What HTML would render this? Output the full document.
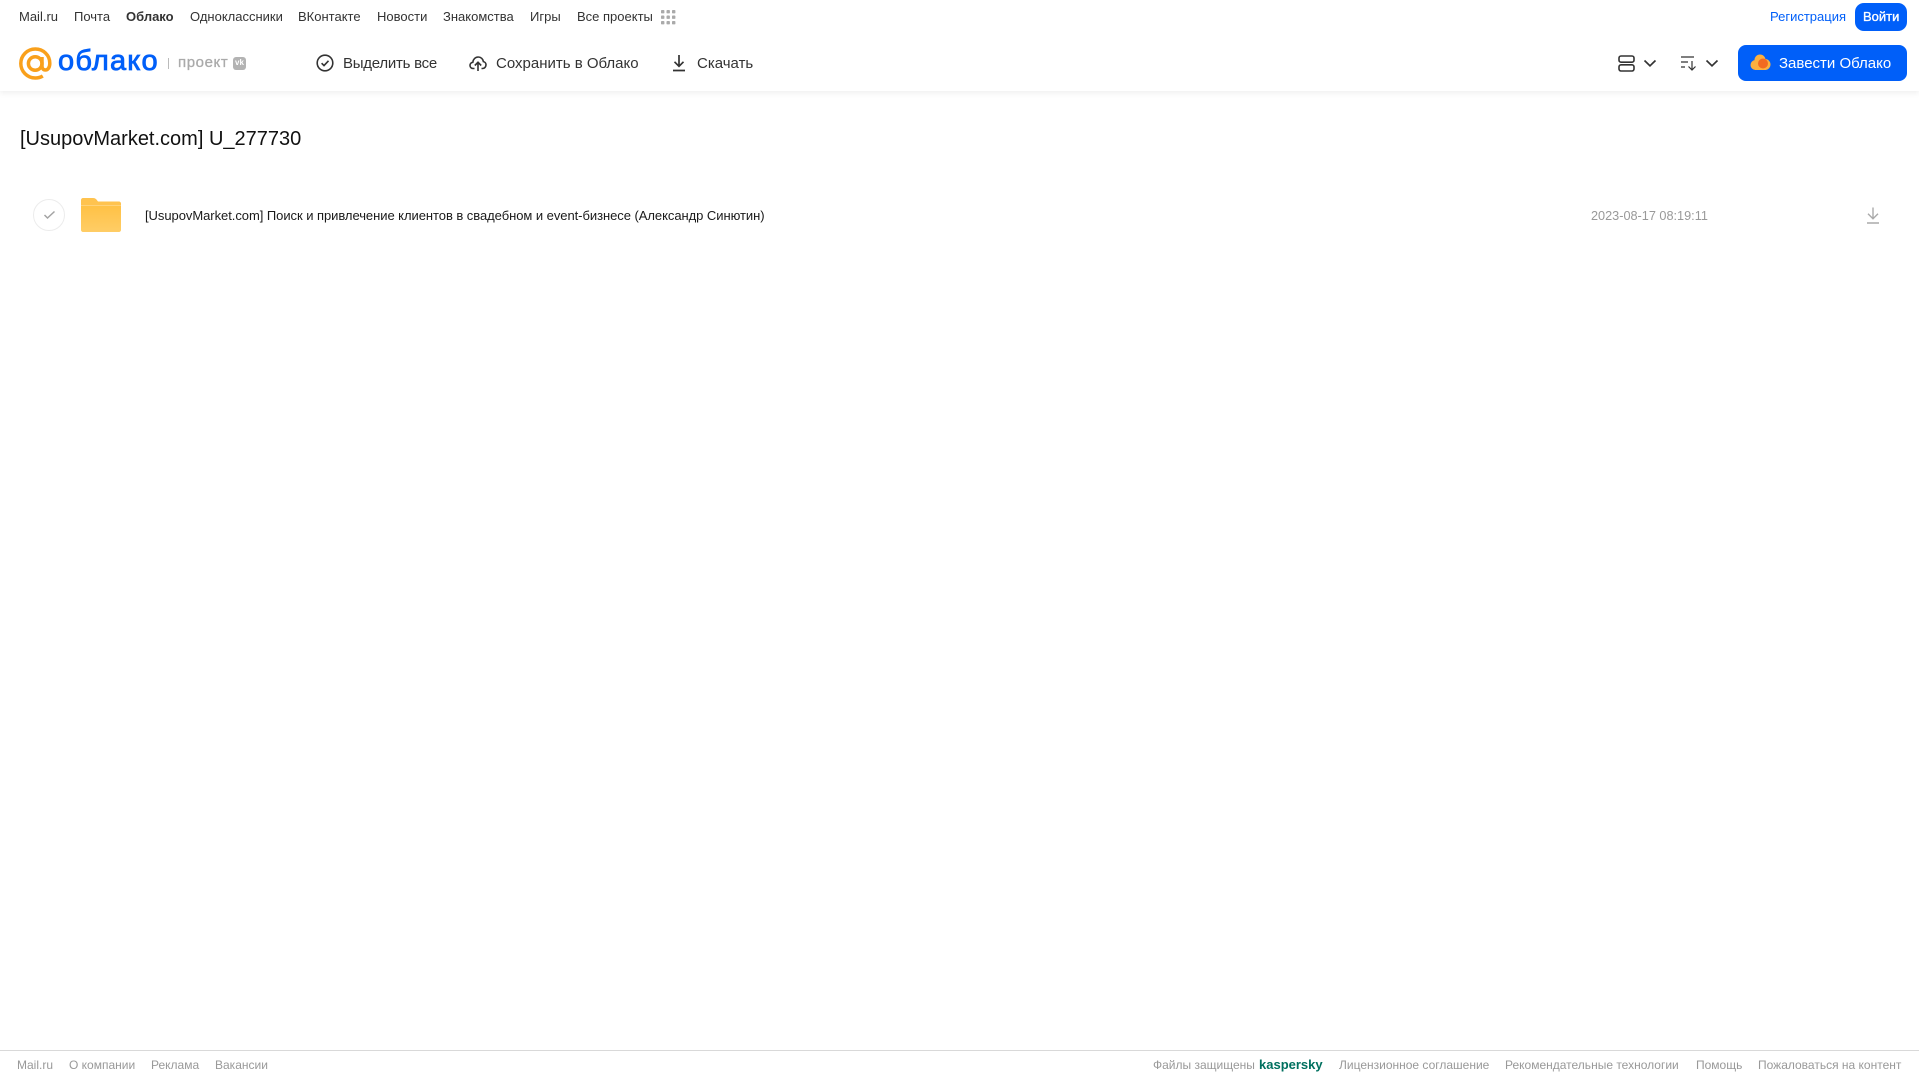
<!DOCTYPE html>
<html lang="ru"><head><meta charset="utf-8"><title>Облако</title>
<style>
html,body{margin:0;padding:0;background:#fff}
body{width:1919px;height:1079px;position:relative;overflow:hidden;font-family:"Liberation Sans",Arial,sans-serif}
.t{position:absolute;white-space:nowrap;line-height:20px;height:20px}
.n{top:7px;font-size:13px;color:#333}
.b{top:53px;font-size:15px;color:#333;padding-top:1px}
.f{top:1055px;font-size:12px;color:#999}
svg{position:absolute;display:block}
</style></head><body>
<div style="position:absolute;left:0;top:0;width:1919px;height:91px;background:#fff;box-shadow:0 2px 6px rgba(0,0,0,.07)"></div>

<span class="t n" style="left:19px">Mail.ru</span>
<span class="t n" style="left:74px">Почта</span>
<span class="t n" style="left:126px;font-weight:bold">Облако</span>
<span class="t n" style="left:190px">Одноклассники</span>
<span class="t n" style="left:298px">ВКонтакте</span>
<span class="t n" style="left:377px">Новости</span>
<span class="t n" style="left:443px">Знакомства</span>
<span class="t n" style="left:530px">Игры</span>
<span class="t n" style="left:577px">Все проекты</span>
<svg style="left:661px;top:10px" width="15" height="15" fill="#aaa"><rect x="0" y="0" width="3.4" height="3.4" rx=".8"/><rect x="5.5" y="0" width="3.4" height="3.4" rx=".8"/><rect x="11" y="0" width="3.4" height="3.4" rx=".8"/><rect x="0" y="5.5" width="3.4" height="3.4" rx=".8"/><rect x="5.5" y="5.5" width="3.4" height="3.4" rx=".8"/><rect x="11" y="5.5" width="3.4" height="3.4" rx=".8"/><rect x="0" y="11" width="3.4" height="3.4" rx=".8"/><rect x="5.5" y="11" width="3.4" height="3.4" rx=".8"/><rect x="11" y="11" width="3.4" height="3.4" rx=".8"/></svg>

<span class="t n" style="left:1770px;color:#005ff9">Регистрация</span>
<div style="position:absolute;left:1855px;top:3px;width:52px;height:28px;border-radius:9px;background:#005ff9"></div>
<span class="t n" style="left:1863px;color:#fff;font-size:13px;-webkit-text-stroke:.35px #fff">Войти</span>

<svg style="left:19px;top:47px" width="33" height="33" viewBox="0 0 33 33" fill="none" stroke="#f9a01b" stroke-width="3.5"><circle cx="16.2" cy="16.5" r="6.8"/><path d="M23 10v8.800c0 2.800 1.500 4.200 3.300 4.200 2.400 0 4.500-2.300 4.500-6.800C30.800 8.200 24.400 2 16.300 2 8.300 2 1.800 8.500 1.800 16.500S8.300 31 16.300 31c3 0 5.400-.7 7.500-2"/></svg>
<span class="t" style="left:58px;top:45px;height:32px;line-height:32px;font-size:29px;color:#005ff9;letter-spacing:1.200px;-webkit-text-stroke:.8px #005ff9">облако</span>
<div style="position:absolute;left:168px;top:58px;width:1px;height:11px;background:#bbb"></div>
<span class="t" style="left:178px;top:53px;font-size:15px;color:#aaa;letter-spacing:.6px;-webkit-text-stroke:.3px #aaa">проект</span>
<div style="position:absolute;left:233px;top:57px;width:13px;height:13px;border-radius:3px;background:#b3b3b3"></div>
<span class="t" style="left:235px;top:53px;font-size:8px;font-weight:bold;color:#fff;line-height:20px">vk</span>

<svg style="left:316px;top:54px" width="18" height="18" viewBox="0 0 18 18" fill="none" stroke="#333" stroke-width="1.6"><circle cx="9" cy="9" r="7.800"/><path d="M5.600 9.200l2.400 2.400 4.500-4.800"/></svg>
<span class="t b" style="left:343px;letter-spacing:-.25px">Выделить все</span>
<svg style="left:469px;top:54px" width="18" height="18" viewBox="0 0 18 18" fill="none" stroke="#333" stroke-width="1.6"><path d="M5.500 14.500H4.200C2.400 14.500 1 13.200 1 11.400c0-1.600 1.200-2.900 2.800-3.100C4.200 5.200 6.400 3 9.200 3c2.700 0 4.800 2 5.200 4.600 1.500.3 2.600 1.600 2.600 3.200 0 2-1.500 3.700-3.500 3.700h-1"/><path d="M9 17V8.500M5.800 11.500L9 8.300l3.200 3.200"/></svg>
<span class="t b" style="left:496px">Сохранить в Облако</span>
<svg style="left:670px;top:54px" width="18" height="18" viewBox="0 0 18 18" fill="none" stroke="#333" stroke-width="1.7"><path d="M9 1v11M4.500 7.800L9 12.300l4.500-4.500M3 16.500h12"/></svg>
<span class="t b" style="left:697px">Скачать</span>

<svg style="left:1618px;top:55px" width="17" height="17" viewBox="0 0 17 17" fill="none" stroke="#333" stroke-width="1.600"><rect x="1" y="1" width="15" height="6.200" rx="2"/><rect x="1" y="9.800" width="15" height="6.200" rx="2"/></svg>
<svg style="left:1643px;top:59px" width="14" height="9" viewBox="0 0 14 9" fill="none" stroke="#333" stroke-width="1.700"><path d="M1.500 1.500L7 6.800l5.500-5.300"/></svg>
<svg style="left:1680px;top:55px" width="18" height="16" viewBox="0 0 18 16" fill="none" stroke="#333" stroke-width="1.200"><path d="M1 2h13M1 7h7M1 12h4M12 6v9M8.500 11.500L12 15l3.500-3.500"/></svg>
<svg style="left:1705px;top:59px" width="14" height="9" viewBox="0 0 14 9" fill="none" stroke="#333" stroke-width="1.700"><path d="M1.500 1.500L7 6.800l5.500-5.300"/></svg>

<div style="position:absolute;left:1738px;top:45px;width:169px;height:36px;border-radius:8px;background:#005ff9"></div>
<svg style="left:1750px;top:54px" width="21" height="17" viewBox="0 0 21 17"><circle cx="10" cy="6" r="5.500" fill="#fbb040"/><circle cx="5.500" cy="11" r="5" fill="#fbb040"/><circle cx="15" cy="10.500" r="5.500" fill="#fbb040"/><rect x="5" y="9" width="11" height="7" fill="#fbb040"/><circle cx="13" cy="9.500" r="5" fill="#f26a21"/></svg>
<span class="t b" style="left:1779px;color:#fff">Завести Облако</span>

<span class="t" style="left:20px;top:127px;height:24px;line-height:24px;font-size:20px;color:#111">[UsupovMarket.com] U_277730</span>

<div style="position:absolute;left:33px;top:199px;width:30px;height:30px;border:1px solid #ececec;border-radius:50%"></div>
<svg style="left:43px;top:210px" width="13" height="10" viewBox="0 0 13 10" fill="none" stroke="#a3a3a3" stroke-width="1.500"><path d="M1.500 5l3 3 7-6.500"/></svg>
<svg style="left:81px;top:198px" width="40" height="34" viewBox="0 0 40 34"><defs><linearGradient id="fg" x1="0" y1="0" x2="0" y2="1"><stop offset="0" stop-color="#ffc145"/><stop offset="1" stop-color="#ffcd66"/></linearGradient></defs><path d="M2 0h10c2 0 3 .8 4 2.200L17 3.500h21c1.100 0 2 .9 2 2V8H0V2C0 .9.900 0 2 0z" fill="#ffc34f"/><path d="M0 7.500h40V32c0 1.100-.9 2-2 2H2c-1.100 0-2-.9-2-2z" fill="url(#fg)"/><path d="M0 7h40v1H0z" fill="#ffd27a"/></svg>
<span class="t" style="left:145px;top:206px;font-size:13px;letter-spacing:-.05px;color:#1a1a1a">[UsupovMarket.com] Поиск и привлечение клиентов в свадебном и event-бизнесе (Александр Синютин)</span>
<span class="t" style="left:1591px;top:206px;font-size:12.700px;color:#999">2023-08-17 08:19:11</span>
<svg style="left:1866px;top:206px" width="14" height="18" viewBox="0 0 14 18" fill="none" stroke="#aaa" stroke-width="1.400"><path d="M7 1.500v11M2 7.800l5 5 5-5M1 17h12"/></svg>

<div style="position:absolute;left:0;top:1050px;width:1919px;height:1px;background:#d9d9d9"></div>
<span class="t f" style="left:17px">Mail.ru</span>
<span class="t f" style="left:69px">О компании</span>
<span class="t f" style="left:151px">Реклама</span>
<span class="t f" style="left:215px">Вакансии</span>
<span class="t f" style="left:1153px">Файлы защищены</span>
<span class="t f" style="left:1259px;color:#00705f;font-weight:bold;font-size:13px">kaspersky</span>
<span class="t f" style="left:1339px">Лицензионное соглашение</span>
<span class="t f" style="left:1505px">Рекомендательные технологии</span>
<span class="t f" style="left:1696px">Помощь</span>
<span class="t f" style="left:1758px">Пожаловаться на контент</span>
</body></html>
